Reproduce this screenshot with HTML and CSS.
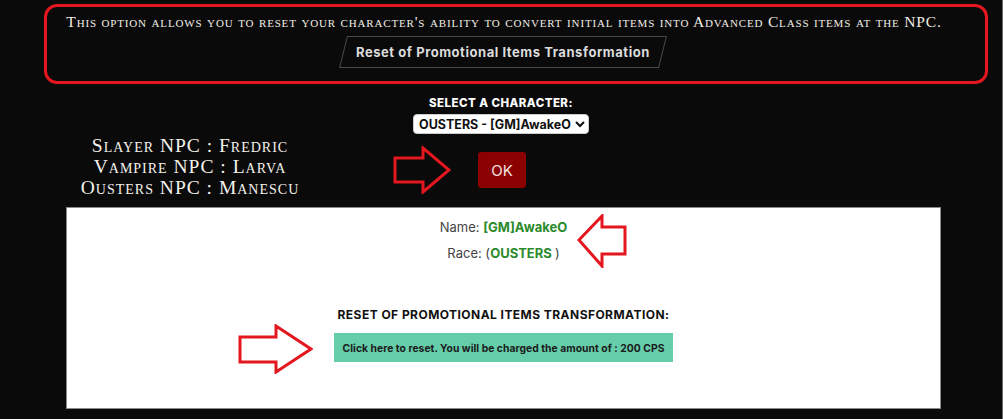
FILE: index.html
```html
<!DOCTYPE html>
<html lang="en">
<head>
<meta charset="utf-8">
<title>Reset of Promotional Items Transformation</title>
<link rel="stylesheet" href="styles.css">
</head>
<body>
<div class="page">
  <section class="notice">
    <p class="notice-text">This option allows you to reset your character's ability to convert initial items into Advanced Class items at the NPC.</p>
    <div class="tab"><span class="tab-label">Reset of Promotional Items Transformation</span></div>
  </section>

  <section class="picker">
    <div class="picker-label">SELECT A CHARACTER:</div>
    <select class="picker-select">
      <option>OUSTERS - [GM]AwakeO</option>
    </select>
    <div class="picker-row">
      <div class="npcs">
        <div>Slayer NPC : Fredric</div>
        <div>Vampire NPC : Larva</div>
        <div>Ousters NPC : Manescu</div>
      </div>
      <div class="ok-group">
        <svg class="arrow-ok" width="58" height="48" viewBox="0 0 58 48"><polygon points="2,12 30,12 30,2 56,24 30,46 30,36 2,36" fill="none" stroke="#e4161e" stroke-width="3" stroke-linejoin="miter"/></svg>
        <button class="ok">OK</button>
      </div>
    </div>
  </section>

  <section class="panel">
    <div class="info">
      <div class="info-line">Name: <b class="green">[GM]AwakeO</b></div>
      <div class="info-line">Race: (<b class="green">OUSTERS </b>)</div>
    </div>
    <svg class="arrow-name" width="50" height="54" viewBox="0 0 50 54"><polygon points="2,26 25,2 25,13 48,13 48,40 25,40 25,52" fill="none" stroke="#e4161e" stroke-width="3"/></svg>
    <div class="reset-title">RESET OF PROMOTIONAL ITEMS TRANSFORMATION:</div>
    <div class="reset-wrap">
      <svg class="arrow-reset" width="75" height="50" viewBox="0 0 75 50"><polygon points="2,13 38,13 38,2 73,25 38,48 38,38 2,38" fill="none" stroke="#e4161e" stroke-width="3"/></svg>
      <button class="reset-btn">Click here to reset. You will be charged the amount of : 200 CPS</button>
    </div>
  </section>
</div>
</body>
</html>
```

FILE: styles.css
```css
html {
  background: #0a0a0a;
}
body {
  margin: 0;
  background: #0a0a0a;
  font-family: Inter, "Open Sans", sans-serif;
  border-right: 1px solid #6a6a6a;
  min-height: 419px;
  box-sizing: border-box;
}
.page {
  width: 1002px;
}
.notice {
  box-sizing: border-box;
  margin: 4px 0 0 44px;
  width: 944px;
  height: 80px;
  border: 3px solid #e4161e;
  border-radius: 13px;
  display: flex;
  flex-direction: column;
  align-items: center;
}
.notice-text {
  margin: 5px 24px 0 0;
  font-family: "Liberation Serif", serif;
  font-variant: small-caps;
  font-size: 15.5px;
  line-height: 20px;
  color: #f2efe6;
  letter-spacing: 0.83px;
  white-space: nowrap;
}
.tab {
  margin: 4px 26px 0 0;
  width: 320px;
  height: 32px;
  border: 1px solid #4a4a4a;
  transform: skewX(-14deg);
  display: flex;
  align-items: center;
  justify-content: center;
  box-sizing: border-box;
}
.tab-label {
  transform: skewX(14deg);
  font-weight: 700;
  font-size: 13px;
  color: #dcdcdc;
  letter-spacing: 0.55px;
}
.picker {
  display: flex;
  flex-direction: column;
  align-items: center;
  margin-top: 12px;
}
.picker-label {
  font-weight: 800;
  font-size: 11.5px;
  line-height: 14px;
  color: #ffffff;
  letter-spacing: 0.45px;
}
.picker-select {
  margin-top: 4px;
  height: 20px;
  font-family: Inter, sans-serif;
  font-weight: 700;
  font-size: 12.5px;
  color: #111;
  background: #fff;
  border: 1px solid #ccc;
  border-radius: 4px;
  padding: 0 1px;
}
.picker-row {
  align-self: stretch;
  display: flex;
  align-items: center;
  margin-top: 1px;
}
.npcs {
  width: 240px;
  margin-left: 70px;
  text-align: center;
  font-family: "Liberation Serif", serif;
  font-variant: small-caps;
  font-size: 19.5px;
  line-height: 21px;
  letter-spacing: 1px;
  color: #f4f2ec;
}
.ok-group {
  display: flex;
  align-items: center;
  margin-left: 83px;
  padding-top: 7px;
}
.arrow-ok {
  display: block;
}
.ok {
  margin-left: 27px;
  width: 48px;
  height: 36px;
  border: none;
  border-radius: 3px;
  background: #8b0000;
  color: #f3e2e2;
  font-family: Inter, sans-serif;
  font-size: 15px;
  padding: 0;
}
.panel {
  position: relative;
  box-sizing: border-box;
  margin: 9px 0 0 66px;
  width: 875px;
  height: 202px;
  background: #fff;
  border: 1px solid #8a8a8a;
  display: flex;
  flex-direction: column;
  align-items: center;
  padding-top: 6px;
}
.info {
  text-align: center;
  font-size: 13px;
  line-height: 26px;
  color: #444;
}
.green {
  color: #2b8a2b;
  font-weight: 700;
}
.arrow-name {
  position: absolute;
  left: 510px;
  top: 6px;
}
.reset-title {
  margin-top: 41px;
  font-weight: 700;
  font-size: 12px;
  line-height: 16px;
  letter-spacing: 0.45px;
  color: #111;
}
.reset-wrap {
  position: relative;
  margin-top: 10px;
}
.arrow-reset {
  position: absolute;
  right: calc(100% + 21px);
  top: -9px;
}
.reset-btn {
  display: block;
  width: 339px;
  height: 29px;
  border: none;
  background: #66cdaa;
  color: #1a1a1a;
  font-family: Inter, sans-serif;
  font-weight: 700;
  font-size: 10.3px;
  letter-spacing: 0.05px;
  padding: 0;
}
```
